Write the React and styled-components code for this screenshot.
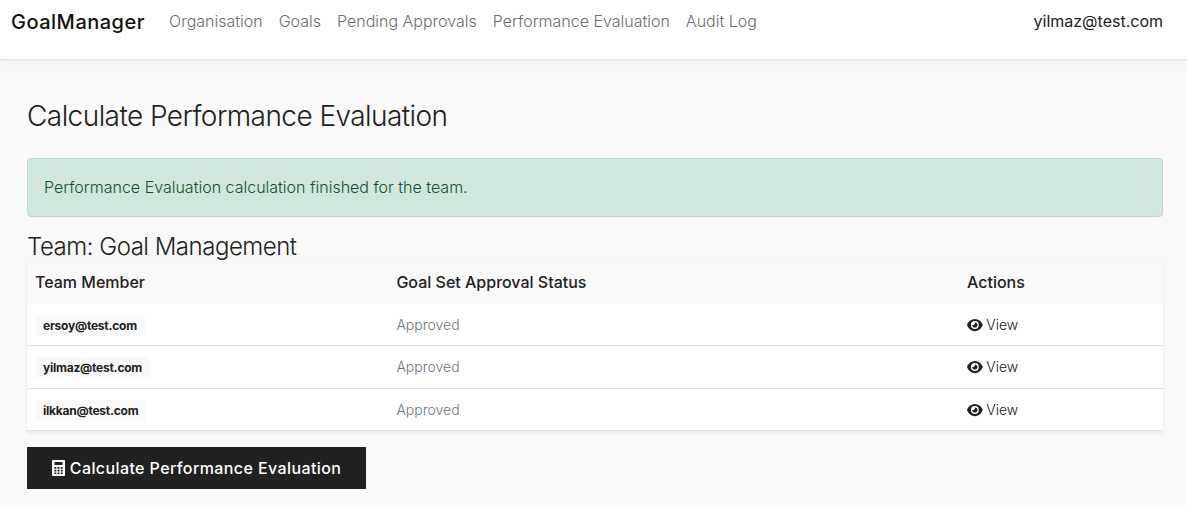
import React from "react";
import styled, { createGlobalStyle } from "styled-components";
import { FaEye } from "react-icons/fa6";

const GlobalStyle = createGlobalStyle`
  *, *::before, *::after { box-sizing: border-box; }
  body {
    margin: 0;
    background: #f9f9f9;
    color: #212121;
    font-family: Inter, "Liberation Sans", sans-serif;
    font-size: 16px;
    font-weight: 300;
    line-height: 24px;
  }
`;

const Header = styled.header`
  display: flex;
  align-items: flex-start;
  height: 60px;
  padding: 8px 24px 0 11px;
  background: #fff;
  border-bottom: 1px solid #dee2e6;
  box-shadow: 0 2px 4px rgba(0, 0, 0, 0.05);
  line-height: 27px;
`;

const Brand = styled.a`
  margin-right: 24px;
  color: #121212;
  font-size: 20px;
  font-weight: 500;
  line-height: 28px;
  letter-spacing: 0.5px;
`;

const Nav = styled.nav`
  display: flex;
  flex: 1;
  gap: 16px;
  color: #6d6d6d;
`;

const NavLink = styled.a`
  white-space: nowrap;
`;

const Account = styled.span`
  color: #212121;
  font-weight: 400;
`;

const Main = styled.main`
  padding: 40px 24px 0 27px;
`;

const Title = styled.h1`
  margin: 0 0 25px;
  font-size: 28px;
  font-weight: 300;
  line-height: 33px;
  letter-spacing: -0.02em;
`;

const Alert = styled.div`
  height: 59px;
  margin-bottom: 16px;
  padding: 16px;
  border: 1px solid #badbcc;
  border-radius: 4px;
  background: #d1e7dd;
  color: #0f5132;
`;

const TeamTitle = styled.h2`
  margin: 0;
  font-size: 24px;
  font-weight: 300;
  line-height: 28px;
  letter-spacing: -0.02em;
`;

const Table = styled.div`
  margin-bottom: 16px;
  background: #fff;
  box-shadow: 0 2px 4px rgba(0, 0, 0, 0.075);
`;

const Row = styled.div`
  display: grid;
  grid-template-columns: 361.4px 570.6px 1fr;
  align-items: center;
  height: ${(p) => p.$height}px;
  padding-left: 8px;
  border-bottom: 1px solid #dee2e6;
  font-size: 14px;
`;

const HeadRow = styled(Row)`
  padding-bottom: 2px;
  border-bottom: 0;
  background: #f9f9f9;
  font-size: 16px;
  font-weight: 500;
`;

const Badge = styled.span`
  display: inline-block;
  padding: 4px 8px;
  border-radius: 4px;
  background: #f9f9f9;
  font-size: 12px;
  font-weight: 700;
  line-height: 13px;
  letter-spacing: -0.24px;
`;

const Status = styled.span`
  color: #6c757d;
`;

const ViewLink = styled.a`
  display: flex;
  align-items: center;
  gap: 3.5px;
`;

const CalculateButton = styled.button`
  display: flex;
  align-items: center;
  gap: 4.8px;
  height: 42px;
  padding: 0 25px;
  border: 0;
  background: #212121;
  color: #fff;
  font-family: inherit;
  font-size: 16px;
  font-weight: 500;
  letter-spacing: 0.4px;
`;

const EyeIcon = styled(FaEye)`
  width: 15.75px;
  height: 14px;
`;

const CalculatorSvg = styled.svg`
  width: 13px;
  height: 16px;
  flex: none;
`;

function CalculatorIcon() {
  return (
    <CalculatorSvg viewBox="0 0 13 16" aria-hidden="true">
      <path
        fill="currentColor"
        fillRule="evenodd"
        d="M.7 0h11.6q.7 0 .7.7v14.6q0 .7-.7.7H.7q-.7 0-.7-.7V.7Q0 0 .7 0Z
           M2.5 2h8v3h-8Z
           M2.3 7h2v1.7h-2Z M5.5 7h2v1.7h-2Z M8.7 7h2v1.7h-2Z
           M2.3 9.7h2v1.7h-2Z M5.5 9.7h2v1.7h-2Z M8.7 9.7h2v1.7h-2Z
           M2.3 12.4h2v1.7h-2Z M5.5 12.4h2v1.7h-2Z M8.7 12.4h2v1.7h-2Z"
      />
    </CalculatorSvg>
  );
}

const links = ["Organisation", "Goals", "Pending Approvals", "Performance Evaluation", "Audit Log"];

const members = [
  { email: "ersoy@test.com", height: 42 },
  { email: "yilmaz@test.com", height: 43 },
  { email: "ilkkan@test.com", height: 42 },
];

export default function App() {
  return (
    <>
      <GlobalStyle />
      <Header>
        <Brand>GoalManager</Brand>
        <Nav>
          {links.map((label) => (
            <NavLink key={label}>{label}</NavLink>
          ))}
        </Nav>
        <Account>yilmaz@test.com</Account>
      </Header>
      <Main>
        <Title>Calculate Performance Evaluation</Title>
        <Alert>Performance Evaluation calculation finished for the team.</Alert>
        <TeamTitle>Team: Goal Management</TeamTitle>
        <Table>
          <HeadRow $height={43}>
            <span>Team Member</span>
            <span>Goal Set Approval Status</span>
            <span>Actions</span>
          </HeadRow>
          {members.map((m) => (
            <Row key={m.email} $height={m.height}>
              <span><Badge>{m.email}</Badge></span>
              <Status>Approved</Status>
              <ViewLink><EyeIcon />View</ViewLink>
            </Row>
          ))}
        </Table>
        <CalculateButton><CalculatorIcon />Calculate Performance Evaluation</CalculateButton>
      </Main>
    </>
  );
}
